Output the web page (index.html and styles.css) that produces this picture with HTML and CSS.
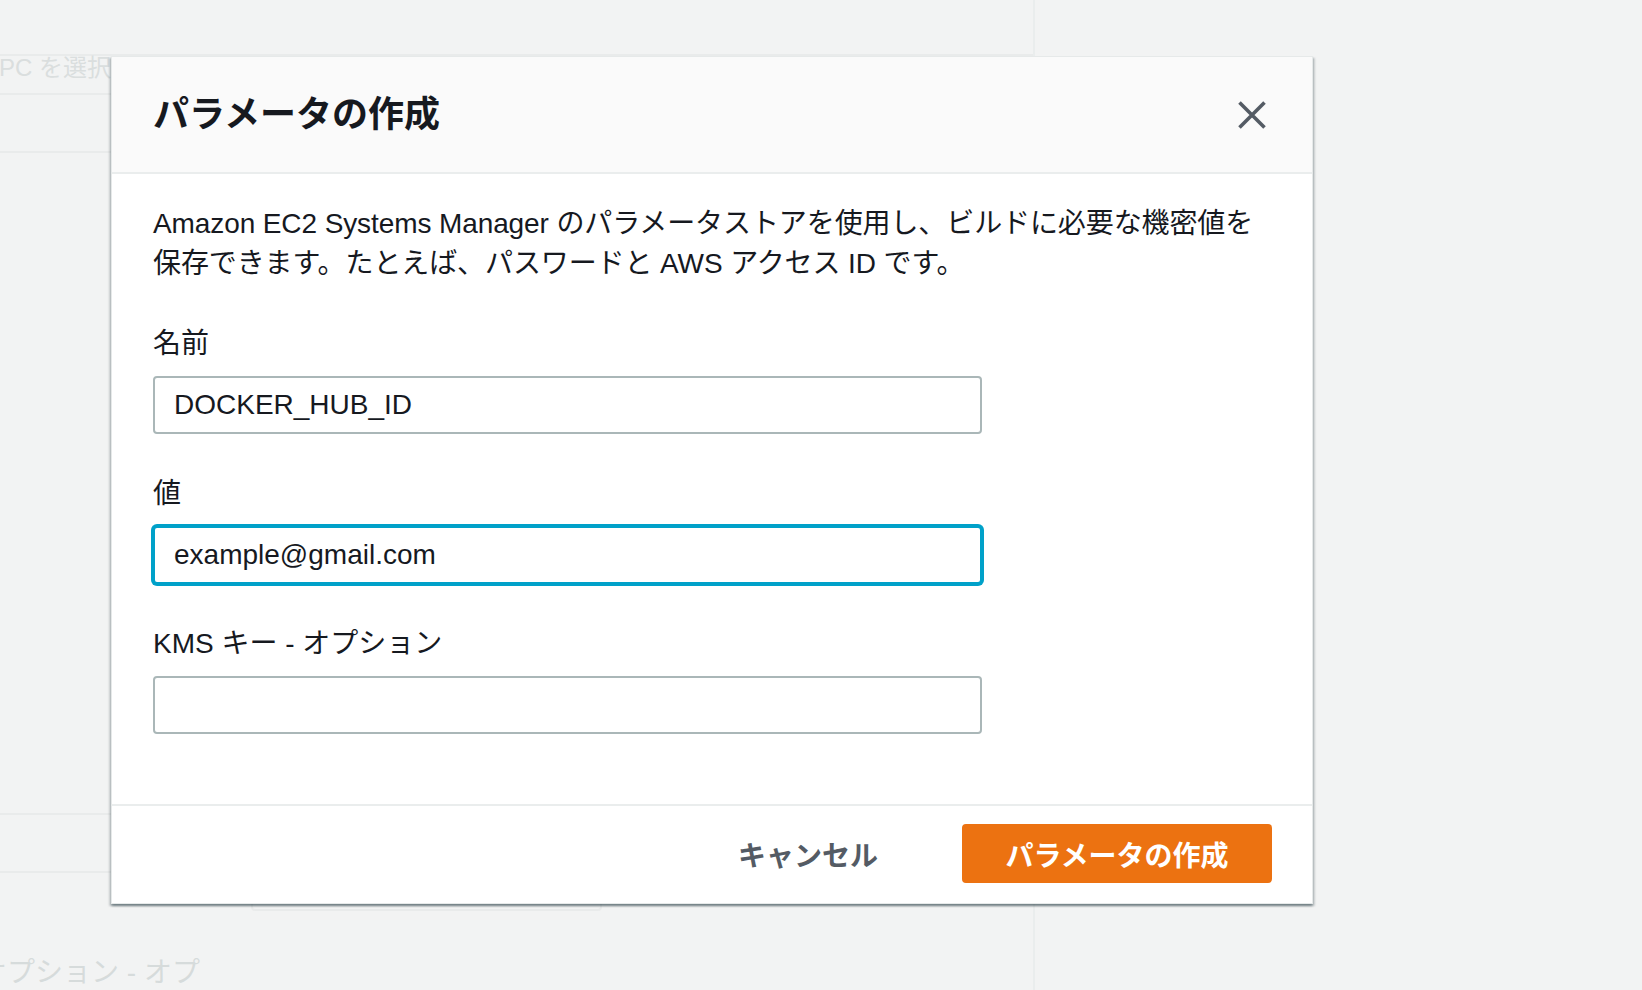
FILE: index.html
```html
<!DOCTYPE html>
<html lang="ja">
<head>
<meta charset="utf-8">
<title>パラメータの作成</title>
<link rel="stylesheet" href="styles.css">
</head>
<body>
<div class="page">
  <div class="main">
    <div class="bg-head"></div>
    <div class="bg-label"><span class="bg-text bg-text-vpc">VPC を選択</span></div>
    <div class="bg-gap"></div>
    <div class="bg-spacer"></div>
    <div class="bg-row"></div>
    <div class="bg-box-wrap"><div class="bg-box"></div></div>
    <div class="bg-bottom"><span class="bg-text bg-text-opt">オプション - オプ</span></div>
  </div>
  <div class="side"></div>
</div>

<div class="modal" role="dialog" aria-labelledby="modal-title">
  <div class="modal-header">
    <h2 class="modal-title" id="modal-title">パラメータの作成</h2>
    <button class="close-btn" aria-label="閉じる">
      <svg width="28" height="28" viewBox="0 0 28 28" aria-hidden="true">
        <path d="M1.5 1.5 L26.5 26.5 M26.5 1.5 L1.5 26.5" stroke="#545b64" stroke-width="3.6" fill="none"/>
      </svg>
    </button>
  </div>
  <div class="modal-body">
    <p class="desc">Amazon EC2 Systems Manager のパラメータストアを使用し、ビルドに必要な機密値を<br>保存できます。たとえば、パスワードと AWS アクセス ID です。</p>
    <div class="field">
      <label class="field-label">名前</label>
      <div class="input">DOCKER_HUB_ID</div>
    </div>
    <div class="field">
      <label class="field-label">値</label>
      <div class="input input-focus">example@gmail.com</div>
    </div>
    <div class="field">
      <label class="field-label">KMS キー - オプション</label>
      <div class="input"></div>
    </div>
  </div>
  <div class="modal-footer">
    <button class="btn-cancel">キャンセル</button>
    <button class="btn-primary">パラメータの作成</button>
  </div>
</div>
</body>
</html>
```

FILE: styles.css
```css
* { box-sizing: border-box; }

html, body {
  margin: 0;
  padding: 0;
  width: 1642px;
  height: 990px;
  overflow: hidden;
  background: #f2f3f3;
  font-family: "Liberation Sans", "Noto Sans CJK JP", sans-serif;
  color: #16191f;
}

.page {
  display: flex;
  width: 1642px;
  height: 990px;
}

.main {
  width: 1035px;
  height: 990px;
  border-right: 2px solid #eaeded;
  overflow: hidden;
}

.side { flex: 1; }

.bg-head {
  height: 56px;
  border-bottom: 2px solid #e9ebeb;
}

.bg-label {
  height: 39px;
  border-bottom: 2px solid #e9ebeb;
}

.bg-text {
  display: block;
  font-size: 28px;
  line-height: 24px;
  color: #dadede;
  white-space: nowrap;
}

.bg-text-vpc {
  margin-left: -17px;
  font-size: 24px;
  line-height: 22px;
  padding-top: 1px;
}

.bg-gap {
  height: 58px;
  border-bottom: 2px solid #e9ebeb;
}

.bg-spacer {
  height: 662px;
  border-bottom: 2px solid #e9ebeb;
}

.bg-row {
  height: 58px;
  border-bottom: 2px solid #e9ebeb;
}

.bg-box-wrap {
  height: 38px;
  padding-left: 251px;
}

.bg-box {
  width: 351px;
  height: 38px;
  border: 2px solid #e9ebeb;
  border-top: 0;
  border-radius: 0 0 4px 4px;
}

.bg-bottom {
  padding-top: 47px;
}

.bg-text-opt {
  margin-left: -21px;
  color: #d6dbdb;
  line-height: 30px;
}

/* Modal */
.modal {
  position: absolute;
  left: 111px;
  top: 56px;
  width: 1202px;
  background: #ffffff;
  border: 1px solid #e6e9e9;
  box-shadow: 0 2px 2px 0 rgba(0, 28, 36, 0.35),
              2px 2px 2px 0 rgba(0, 28, 36, 0.15),
              -2px 2px 2px 0 rgba(0, 28, 36, 0.15);
}

.modal-header {
  height: 117px;
  background: #fafafa;
  border-bottom: 2px solid #eaeded;
  display: flex;
  align-items: center;
  justify-content: space-between;
  padding: 0 46px 0 41px;
}

.modal-title {
  margin: 0;
  font-size: 36px;
  line-height: 44px;
  font-weight: 700;
  color: #16191f;
}

.close-btn {
  background: none;
  border: 0;
  padding: 0;
  width: 28px;
  height: 28px;
  display: flex;
}

.modal-body {
  padding: 30px 41px 70px;
}

.desc {
  margin: 0 0 40px;
  font-size: 28px;
  line-height: 40px;
  white-space: nowrap;
  letter-spacing: -0.1px;
}

.field + .field { margin-top: 40px; }

.field-label {
  display: block;
  font-size: 28px;
  line-height: 40px;
  margin-bottom: 12px;
}

.input {
  width: 829px;
  height: 58px;
  border: 2px solid #aab7b8;
  border-radius: 4px;
  padding: 0 19px;
  font-size: 28px;
  line-height: 54px;
  color: #16191f;
  background: #fff;
}

.input-focus {
  border-color: #00a1c9;
  box-shadow: 0 0 0 2px #00a1c9;
}

.modal-footer {
  border-top: 2px solid #eaeded;
  padding: 18px 40px 20px;
  display: flex;
  justify-content: flex-end;
  align-items: center;
  gap: 42px;
}

.btn-cancel {
  background: none;
  border: 0;
  padding: 0 42px;
  height: 59px;
  font-family: inherit;
  font-size: 28px;
  font-weight: 700;
  color: #545b64;
}

.btn-primary {
  width: 310px;
  height: 59px;
  background: #ec7211;
  border: 2px solid #ec7211;
  border-radius: 4px;
  font-family: inherit;
  font-size: 28px;
  font-weight: 700;
  color: #ffffff;
  padding: 0;
}
```
